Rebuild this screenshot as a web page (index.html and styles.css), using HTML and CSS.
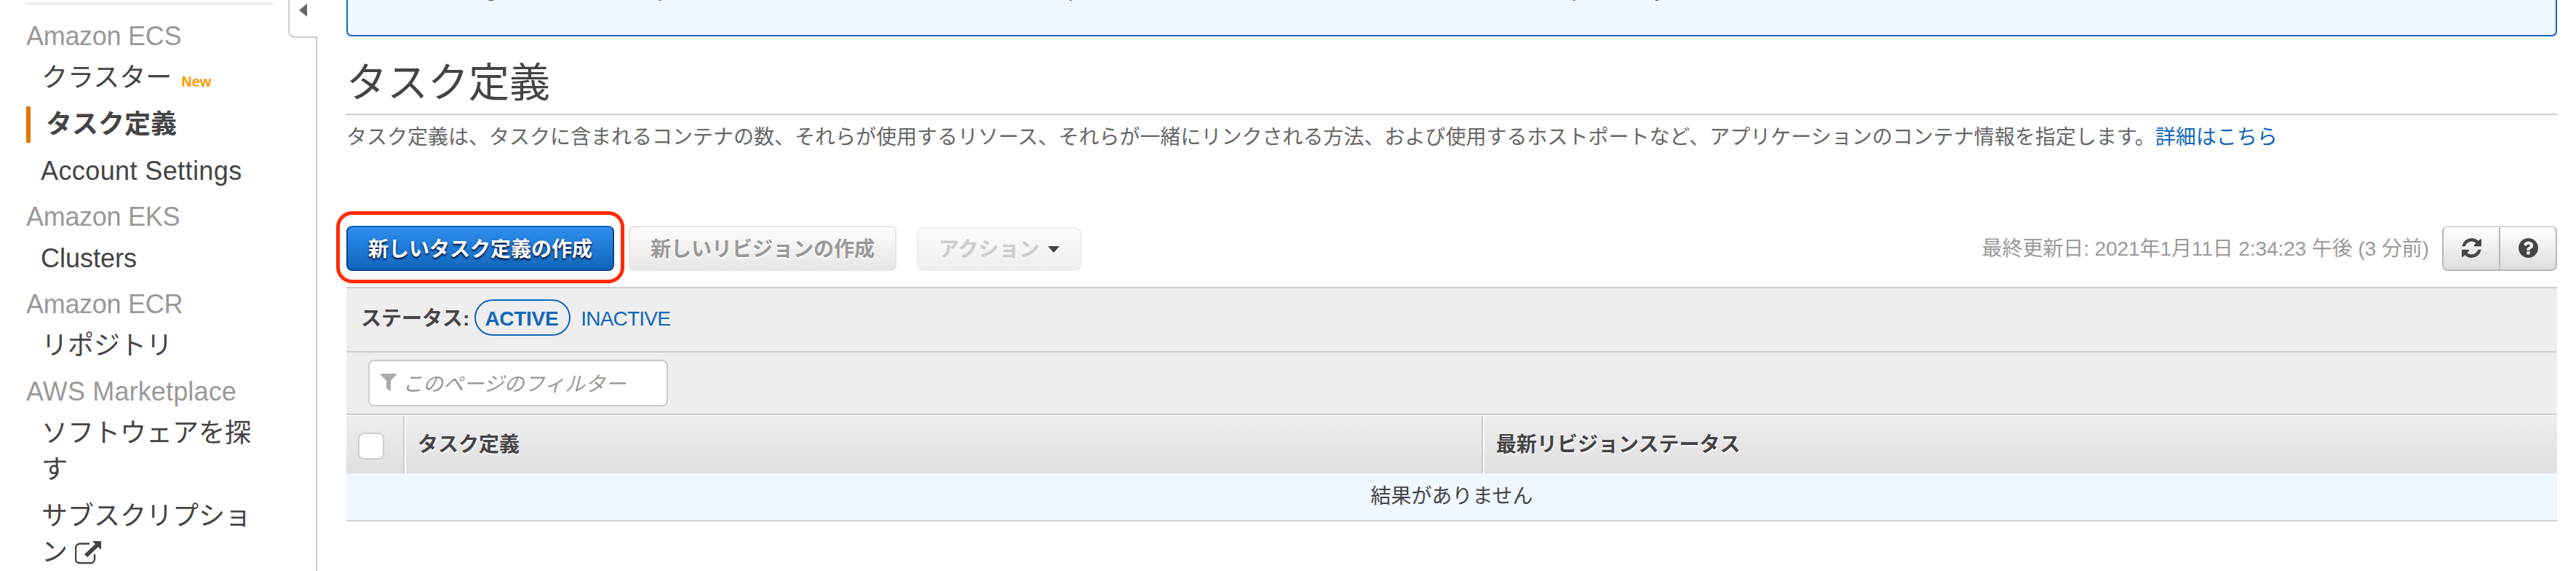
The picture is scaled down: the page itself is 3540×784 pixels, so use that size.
FILE: index.html
```html
<!DOCTYPE html>
<html lang="ja">
<head>
<meta charset="utf-8">
<title>タスク定義</title>
<link rel="stylesheet" href="styles.css">
</head>
<body>
<div class="page">
  <nav class="sidebar">
    <h2 class="group">Amazon ECS</h2>
    <a class="item">クラスター <span class="new">New</span></a>
    <a class="item active">タスク定義</a>
    <a class="item latin wide">Account Settings</a>
    <h2 class="group">Amazon EKS</h2>
    <a class="item latin">Clusters</a>
    <h2 class="group">Amazon ECR</h2>
    <a class="item">リポジトリ</a>
    <h2 class="group market">AWS Marketplace</h2>
    <a class="item">ソフトウェアを探す</a>
    <a class="item">サブスクリプション <svg class="external" viewBox="0 0 36 32"><path d="M20 3.5H7a6 6 0 0 0-6 6V25a5 5 0 0 0 5 5h16a5 5 0 0 0 5-5v-7" fill="none" stroke="#444" stroke-width="2.4"/><path d="M24 0h12v12l-4-4-15 14-4-4L28 4z" fill="#444"/></svg></a>
  </nav>
  <div class="gutter">
    <div class="collapse"><span class="arrow"></span></div>
    <div class="rail"></div>
  </div>
  <main class="content">
    <div class="notice"><div class="notice-line"><span>g</span><span>p</span><span>p</span><span>p</span><span>y</span></div></div>
    <h1 class="title">タスク定義</h1>
    <p class="lead">タスク定義は、タスクに含まれるコンテナの数、それらが使用するリソース、それらが一緒にリンクされる方法、および使用するホストポートなど、アプリケーションのコンテナ情報を指定します。<a class="link">詳細はこちら</a></p>
    <div class="toolbar">
      <div class="primary-wrap"><button class="btn primary">新しいタスク定義の作成</button><span class="marker"></span></div>
      <button class="btn revision">新しいリビジョンの作成</button>
      <button class="btn actions">アクション<span class="caret"></span></button>
      <span class="updated">最終更新日: 2021年1月11日 2:34:23 午後 (3 分前)</span>
      <div class="icons">
        <button class="icon-btn"><svg class="glyph" viewBox="0 0 1536 1536"><path d="M1511 928q0 5-1 7-64 268-268 434.500T764 1536q-146 0-282.500-55T238 1324l-129 129q-19 19-45 19t-45-19-19-45V960q0-26 19-45t45-19h448q26 0 45 19t19 45-19 45l-137 137q71 66 161 102t187 36q134 0 250-65t186-179q11-17 53-117 8-23 30-23h192q13 0 22.500 9.500t9.500 22.500zM1536 128v448q0 26-19 45t-45 19h-448q-26 0-45-19t-19-45 19-45l138-138Q969 256 768 256q-134 0-250 65T332 500q-11 17-53 117-8 23-30 23H50q-13 0-22.500-9.500T18 608v-7q65-268 270-434.500T768 0q146 0 284 55.500T1297 212l130-129q19-19 45-19t45 19 19 45z"/></svg></button>
        <button class="icon-btn"><svg class="glyph" viewBox="0 0 1536 1536"><path d="M896 1248v-192q0-14-9-23t-23-9H672q-14 0-23 9t-9 23v192q0 14 9 23t23 9h192q14 0 23-9t9-23zM1152 576q0-88-55.500-163T958 297t-170-41q-243 0-371 213-15 24 8 42l132 100q7 6 19 6 16 0 25-12 53-68 86-92 34-24 86-24 48 0 85.500 26t37.500 59q0 38-20 61t-68 45q-63 28-115.500 86.500T640 892v36q0 14 9 23t23 9h192q14 0 23-9t9-23q0-19 21.500-49.500T972 829q32-18 49-28.500t46-35 44.500-48 28-60.500 12.500-81zM1536 768q0 209-103 385.500T1153.500 1433 768 1536t-385.500-103T103 1153.500 0 768t103-385.500T382.500 103 768 0t385.500 103T1433 382.500 1536 768z"/></svg></button>
      </div>
    </div>
    <section class="panel">
      <div class="status"><b>ステータス:</b><a class="pill">ACTIVE</a><a class="inactive">INACTIVE</a></div>
      <div class="filter-row"><div class="filter"><svg class="funnel" viewBox="0 0 22 24"><path d="M0 1q0-1 1-1h20q1 0 1 1.500L14 9.500V23q0 1-1.500.7L8 20V9.500L0 1.800z" fill="#aaa"/></svg><span>このページのフィルター</span></div></div>
      <div class="thead">
        <div class="cell check"><span class="box"></span></div>
        <div class="cell name">タスク定義</div>
        <div class="cell rev">最新リビジョンステータス</div>
      </div>
      <div class="empty">結果がありません</div>
    </section>
  </main>
</div>
</body>
</html>
```
FILE: styles.css
```css
* { box-sizing: border-box; }
body {
  margin: 0;
  background: #fff;
  color: #444;
  font-family: "Liberation Sans", "Noto Sans CJK JP", sans-serif;
  font-size: 28px;
}
.page { display: flex; height: 784px; overflow: hidden; }

.sidebar {
  width: 340px;
  margin: 4px 20px 0 36px;
  padding-top: 19px;
  border-top: 2px solid #e8eaea;
  flex: none;
  font-size: 36px;
  line-height: 50px;
}
.group { margin: 13px 0 7px; font-size: 36px; font-weight: 400; color: #999; letter-spacing: -0.3px; }
.group:first-child { margin-top: 0; }
.group.market { letter-spacing: 0.15px; }
.item { display: block; padding: 0 20px 0 21px; color: #444; }
.item + .item { margin-top: 14px; }
.item.active { padding-left: 21px; border-left: 6px solid #e07700; font-weight: 700; }
.item.latin { padding-left: 20px; }
.item.wide { letter-spacing: 0.4px; }
.new { margin-left: 3px; color: #f90; font-size: 20px; font-weight: 700; line-height: 0; }
.external { width: 36px; height: 32px; vertical-align: -4px; }

.gutter { width: 40px; flex: none; display: flex; flex-direction: column; }
.collapse {
  height: 52px;
  padding: 5px 0 0 13px;
  border-left: 2px solid #ccc;
  border-bottom: 2px solid #ccc;
  border-bottom-left-radius: 9px;
}
.arrow { display: block; width: 0; border: solid transparent; border-width: 9px 11px 9px 0; border-right-color: #666; }
.rail { flex: 1; border-right: 2px solid #ccc; }

.content { width: 3038px; margin-left: 40px; flex: none; display: flow-root; }
.notice { display: flow-root; height: 50px; border: 2px solid #16b; border-top: 0; border-radius: 0 0 7px 7px; background: #f0f8ff; }
.notice-line { display: grid; grid-template-columns: 237px 564px 692px 114px 20px; margin: -30px 0 0 189px; line-height: 32px; }
.title { margin: 0; height: 108px; padding-top: 24px; border-bottom: 2px solid #ccc; font-size: 56px; font-weight: 400; line-height: 80px; }
.lead { margin: 0; padding-top: 11px; height: 152px; line-height: 40px; color: #666; white-space: nowrap; }
.link { color: #16b; }

.toolbar { display: flex; align-items: flex-end; height: 62px; }
.btn {
  display: block;
  height: 62px;
  padding: 2px 28px 0;
  border: 2px solid #e5e5e5;
  border-radius: 8px;
  background: linear-gradient(#fcfcfc, #e6e6e6);
  font: 700 28px/58px "Liberation Sans", "Noto Sans CJK JP", sans-serif;
  color: #999;
  white-space: nowrap;
  text-shadow: 0 2px 2px #fff;
}
.primary-wrap { position: relative; }
.primary {
  width: 368px;
  border-color: #16b #0a4484 #0a4484;
  background: linear-gradient(#2e8eee, #16b);
  color: #fff;
  text-shadow: 0 2px 3px #002;
}
.marker { position: absolute; left: -14px; top: -20px; width: 396px; height: 99px; border: 5px solid #ff2a00; border-radius: 22px; }
.revision { width: 368px; margin-left: 20px; }
.actions { display: flex; align-items: center; width: 226px; height: 60px; margin-left: 28px; border-color: #eee; background: linear-gradient(#fcfcfc, #eee); color: #ccc; text-shadow: none; }
.caret { margin: 0 0 2px 11px; border: solid transparent; border-width: 9px 8px 0; border-top-color: #444; }
.updated { margin-left: auto; padding-top: 2px; line-height: 60px; color: #999; white-space: nowrap; letter-spacing: -0.08px; }
.icons { display: flex; width: 158px; height: 62px; margin-left: 18px; border: 2px solid #b8b8b8; border-top-color: #d8d8d8; border-radius: 8px; background: linear-gradient(#fff, #ddd); }
.icon-btn { flex: 1; display: flex; align-items: center; justify-content: center; padding: 0 0 2px; border: 0; background: none; }
.icon-btn + .icon-btn { border-left: 2px solid #b8b8b8; }
.glyph { width: 27px; height: 27px; fill: #444; }

.panel { margin-top: 22px; border-top: 2px solid #ccc; background: #eee; }
.status { display: flex; align-items: center; height: 88px; padding: 0 20px 6px; border-bottom: 2px solid #ccc; line-height: 46px; }
.status b, .inactive { padding-top: 3px; }
.pill { margin-left: 7px; width: 132px; height: 50px; padding: 2px 3px 0 0; border: 2px solid #16b; border-radius: 25px; color: #16b; font-weight: 700; text-align: center; letter-spacing: -0.3px; }
.inactive { margin-left: 14px; color: #16b; letter-spacing: -0.8px; }
.filter-row { height: 86px; padding: 10px 30px; border-bottom: 2px solid #ccc; }
.filter { display: flex; align-items: center; width: 412px; height: 64px; padding: 0 16px 3px 15px; border: 2px solid #ccc; border-radius: 8px; background: #fff; color: #999; font-style: italic; white-space: nowrap; }
.funnel { width: 22px; height: 24px; margin-right: 8px; }
.thead { display: flex; height: 80px; border-top: 1px solid #fff; background: linear-gradient(#eee, #dfdfdf); font-weight: 700; line-height: 79px; text-shadow: 1px 2px 1px #fff; }
.cell + .cell { border-left: 2px solid #fff; }
.check { width: 80px; padding: 23px 0 0 16px; border-right: 2px solid #ccc; }
.box { display: block; width: 36px; height: 37px; border: 2px solid #ccc; border-radius: 8px; background: #fff; }
.name { width: 1482px; padding-left: 16px; border-right: 2px solid #ccc; }
.rev { flex: 1; padding-left: 16px; }
.empty { height: 66px; border-bottom: 2px solid #d0d0d0; background: #f0f8ff; line-height: 63px; text-align: center; }
```
